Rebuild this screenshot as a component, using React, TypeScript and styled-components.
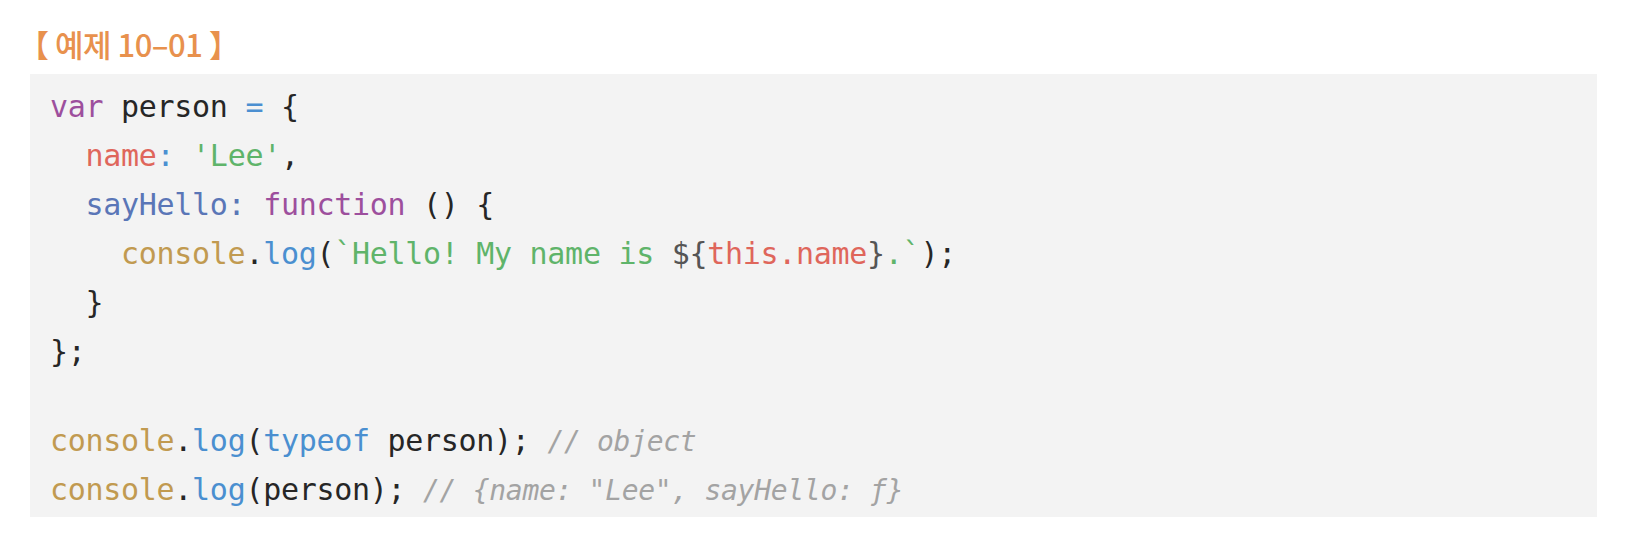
import React from "react";
import styled, { createGlobalStyle } from "styled-components";

const Global = createGlobalStyle`
  html, body { margin: 0; padding: 0; background: #ffffff; }
  #root { width: 1630px; }
`;

const Page = styled.div`
  display: flex;
  flex-direction: column;
  padding: 24px 33px 20px 30px;
`;

const Title = styled.div`
  font-family: "Noto Sans CJK KR", "Noto Sans", sans-serif;
  font-size: 31px;
  font-weight: 500;
  line-height: 40px;
  height: 40px;
  color: #e8914d;
  margin: 0 0 10px -12px;
  letter-spacing: -0.5px;
`;

const CodeBox = styled.pre`
  margin: 0;
  background: #f3f3f3;
  padding: 8px 20px 3px 20px;
  font-family: "DejaVu Sans Mono", "Liberation Mono", monospace;
  font-size: 30px;
  letter-spacing: -0.3px;
  color: #262626;
`;

const Line = styled.div<{ $blank?: boolean }>`
  height: ${(p) => (p.$blank ? "40px" : "49px")};
  line-height: 49px;
  white-space: pre;
`;

const Tok = styled.span<{ $c: string }>`
  color: ${(p) => p.$c};
`;

const Comment = styled.span`
  color: #a3a3a3;
  font-style: italic;
  font-size: 28px;
  letter-spacing: -0.3px;
`;

const C = {
  kw: "#9d4f9d",
  txt: "#262626",
  op: "#4b8fd1",
  key: "#df665b",
  str: "#5fb46a",
  prop: "#5a76b7",
  obj: "#c19a50",
  fn: "#4a8fd0",
  punct: "#555555",
};

export default function App() {
  return (
    <>
      <Global />
      <Page>
        <Title>【 예제 10–01 】</Title>
        <CodeBox>
          <Line>
            <Tok $c={C.kw}>var</Tok> person <Tok $c={C.op}>=</Tok> {"{"}
          </Line>
          <Line>
            {"  "}
            <Tok $c={C.key}>name</Tok>
            <Tok $c={C.op}>:</Tok> <Tok $c={C.str}>'Lee'</Tok>,
          </Line>
          <Line>
            {"  "}
            <Tok $c={C.prop}>sayHello:</Tok> <Tok $c={C.kw}>function</Tok> () {"{"}
          </Line>
          <Line>
            {"    "}
            <Tok $c={C.obj}>console</Tok>.<Tok $c={C.fn}>log</Tok>(
            <Tok $c={C.str}>`Hello! My name is </Tok>
            <Tok $c={C.punct}>{"${"}</Tok>
            <Tok $c={C.key}>this.name</Tok>
            <Tok $c={C.punct}>{"}"}</Tok>
            <Tok $c={C.str}>.`</Tok>);
          </Line>
          <Line>{"  }"}</Line>
          <Line>{"};"}</Line>
          <Line $blank />
          <Line>
            <Tok $c={C.obj}>console</Tok>.<Tok $c={C.fn}>log</Tok>(
            <Tok $c={C.fn}>typeof</Tok> person); <Comment>// object</Comment>
          </Line>
          <Line>
            <Tok $c={C.obj}>console</Tok>.<Tok $c={C.fn}>log</Tok>(person);{" "}
            <Comment>{'// {name: "Lee", sayHello: ƒ}'}</Comment>
          </Line>
        </CodeBox>
      </Page>
    </>
  );
}
